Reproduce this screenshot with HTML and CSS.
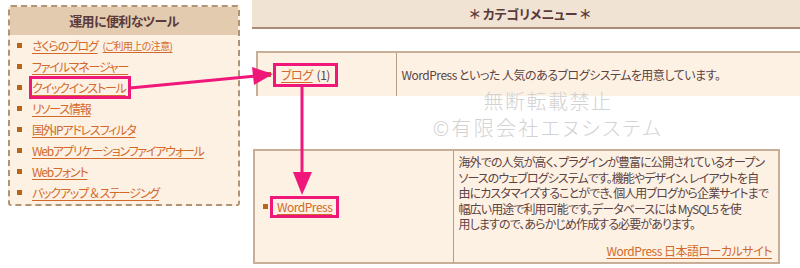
FILE: index.html
```html
<!DOCTYPE html>
<html lang="ja">
<head>
  <meta charset="UTF-8" />
  <meta name="viewport" content="width=device-width, initial-scale=1.0" />
  <title>カテゴリメニュー</title>
  <link rel="stylesheet" href="styles.css">
</head>
<body>
  <div class="page">
    <aside class="tools">
      <h2 class="tools-title">運用に便利なツール</h2>
      <ul class="tool-list">
        <li><a href="#">さくらのブログ</a><a href="#" class="note">(ご利用上の注意)</a></li>
        <li><a href="#">ファイルマネージャー</a></li>
        <li><a href="#" class="mark">クイックインストール</a></li>
        <li><a href="#">リソース情報</a></li>
        <li><a href="#">国外IPアドレスフィルタ</a></li>
        <li><a href="#">Webアプリケーションファイアウォール</a></li>
        <li><a href="#">Webフォント</a></li>
        <li><a href="#">バックアップ ＆ ステージング</a></li>
      </ul>
    </aside>

    <main class="category">
      <h1 class="category-title">＊ カテゴリメニュー ＊</h1>

      <table class="cat-table cat-short">
        <tr>
          <td class="cat-name"><span class="mark-box"><a href="#">ブログ</a><span class="count">(1)</span></span></td>
          <td class="cat-desc">WordPress といった 人気のあるブログシステムを用意しています。</td>
        </tr>
      </table>

      <table class="cat-table cat-detail">
        <tr>
          <td class="cat-name"><span class="mark-box"><a href="#">WordPress</a></span></td>
          <td class="cat-desc">
            <p>海外での人気が高く、プラグインが豊富に公開されているオープン<br>ソースのウェブログシステムです。機能やデザイン、レイアウトを自<br>由にカスタマイズすることができ、個人用ブログから企業サイトまで<br>幅広い用途で利用可能です。データベースには MySQL5 を使<br>用しますので、あらかじめ作成する必要があります。</p>
            <p class="site-link"><a href="#">WordPress 日本語ローカルサイト</a></p>
          </td>
        </tr>
      </table>
    </main>
  </div>

  <div class="watermark">無断転載禁止<br><span class="wm-copy">©有限会社エヌシステム</span></div>

  <!-- annotation arrows -->
  <svg class="arrows" width="800" height="268" viewBox="0 0 800 268">
    <line x1="130" y1="88" x2="256" y2="76" stroke="#f0177b" stroke-width="3" />
    <polygon points="273,74 252,67 254,85" fill="#f0177b" />
    <line x1="302" y1="87" x2="302" y2="176" stroke="#f0177b" stroke-width="3" />
    <polygon points="293,172 312,172 302,195" fill="#f0177b" />
  </svg>
</body>
</html>
```

FILE: styles.css
```css
* {
  box-sizing: border-box;
}

body {
  margin: 0;
  position: relative;
  height: 268px;
  overflow: hidden;
  font-family: "Noto Sans CJK JP", sans-serif;
  font-size: 12px;
  font-feature-settings: "palt";
  color: #5c4444;
  background: #fff;
}

a {
  color: #d2692a;
  text-decoration: underline;
  text-underline-offset: 2px;
}

.page {
  display: flex;
  align-items: flex-start;
}

/* left tool box */
.tools {
  flex-shrink: 0;
  width: 232px;
  margin: 5px 0 0 8px;
  border: 2px dashed #b09478;
  border-radius: 3px;
  background: #fdf1e4;
}

.tools-title {
  margin: 0;
  height: 28px;
  line-height: 28px;
  background: #e3cbb0;
  text-align: center;
  font-size: 13px;
  font-weight: bold;
  letter-spacing: -0.6px;
  color: #5a3a3a;
}

.tool-list {
  list-style: none;
  margin: 0;
  padding: 0 0 1px;
  letter-spacing: -1.2px;
}

.tool-list li {
  display: flex;
  align-items: center;
  height: 21px;
  padding-left: 7px;
}

.tool-list li::before {
  content: "";
  flex-shrink: 0;
  width: 5px;
  height: 5px;
  margin-right: 10px;
  background: #b8651a;
}

.tool-list .note {
  margin-left: 5px;
  font-size: 10px;
  letter-spacing: -0.6px;
}

.tool-list .mark {
  outline: 3px solid #f0177b;
  padding-right: 2px;
}

/* right category area */
.category {
  flex: 1;
  margin-left: 12px;
}

.category-title {
  margin: 0;
  height: 29px;
  line-height: 27px;
  padding-right: 8px;
  background: #f0e3d4;
  border-bottom: 2px solid #a88c78;
  text-align: center;
  font-size: 13px;
  font-weight: bold;
  letter-spacing: -0.2px;
  color: #5a3a3a;
}

.cat-table {
  table-layout: fixed;
  border-collapse: collapse;
  background: #fdf1e4;
  border: 2px solid #c8ae96;
  letter-spacing: -0.5px;
}

.cat-table td {
  padding: 0;
}

.cat-name {
  padding-left: 8px !important;
  vertical-align: middle;
  white-space: nowrap;
}

.cat-name::before {
  content: "";
  display: inline-block;
  width: 5px;
  height: 5px;
  margin-right: 2px;
  vertical-align: middle;
  background: #b8651a;
}

.mark-box {
  display: inline-block;
  vertical-align: middle;
  border: 3px solid #f0177b;
  padding: 0 5px;
  line-height: 18px;
}

.mark-box .count {
  margin-left: 4px;
}

.cat-desc {
  border-left: 1px solid #b89c84;
  white-space: nowrap;
}

.cat-short {
  width: 560px;
  margin: 22px 0 0 4px;
  border-bottom: none;
}

.cat-short td {
  height: 44px;
}

.cat-short .cat-name {
  width: 139px;
}

.cat-short .cat-desc {
  padding: 0 5px !important;
  vertical-align: middle;
}

.cat-detail {
  width: 527px;
  margin: 53px 0 0 1px;
}

.cat-detail td {
  height: 111px;
}

.cat-detail .cat-name {
  width: 199px;
}

.cat-detail .mark-box {
  padding: 0 4px;
  line-height: 16px;
}

.cat-detail .cat-desc {
  vertical-align: top;
  padding: 3px 4px 4px 5px !important;
  line-height: 15.5px;
  letter-spacing: -0.9px;
}

.cat-desc p {
  margin: 0;
}

.cat-desc .site-link {
  margin-top: 11px;
  padding-right: 2px;
  text-align: right;
  letter-spacing: -0.5px;
}

/* overlays */
.watermark {
  position: absolute;
  left: 420px;
  top: 87px;
  width: 256px;
  text-align: center;
  font-size: 20px;
  line-height: 27px;
  letter-spacing: 1.5px;
  font-weight: 300;
  color: #d2d2d2;
  white-space: nowrap;
}

.wm-copy {
  letter-spacing: 2.3px;
}

.arrows {
  position: absolute;
  left: 0;
  top: 0;
  pointer-events: none;
}
```
